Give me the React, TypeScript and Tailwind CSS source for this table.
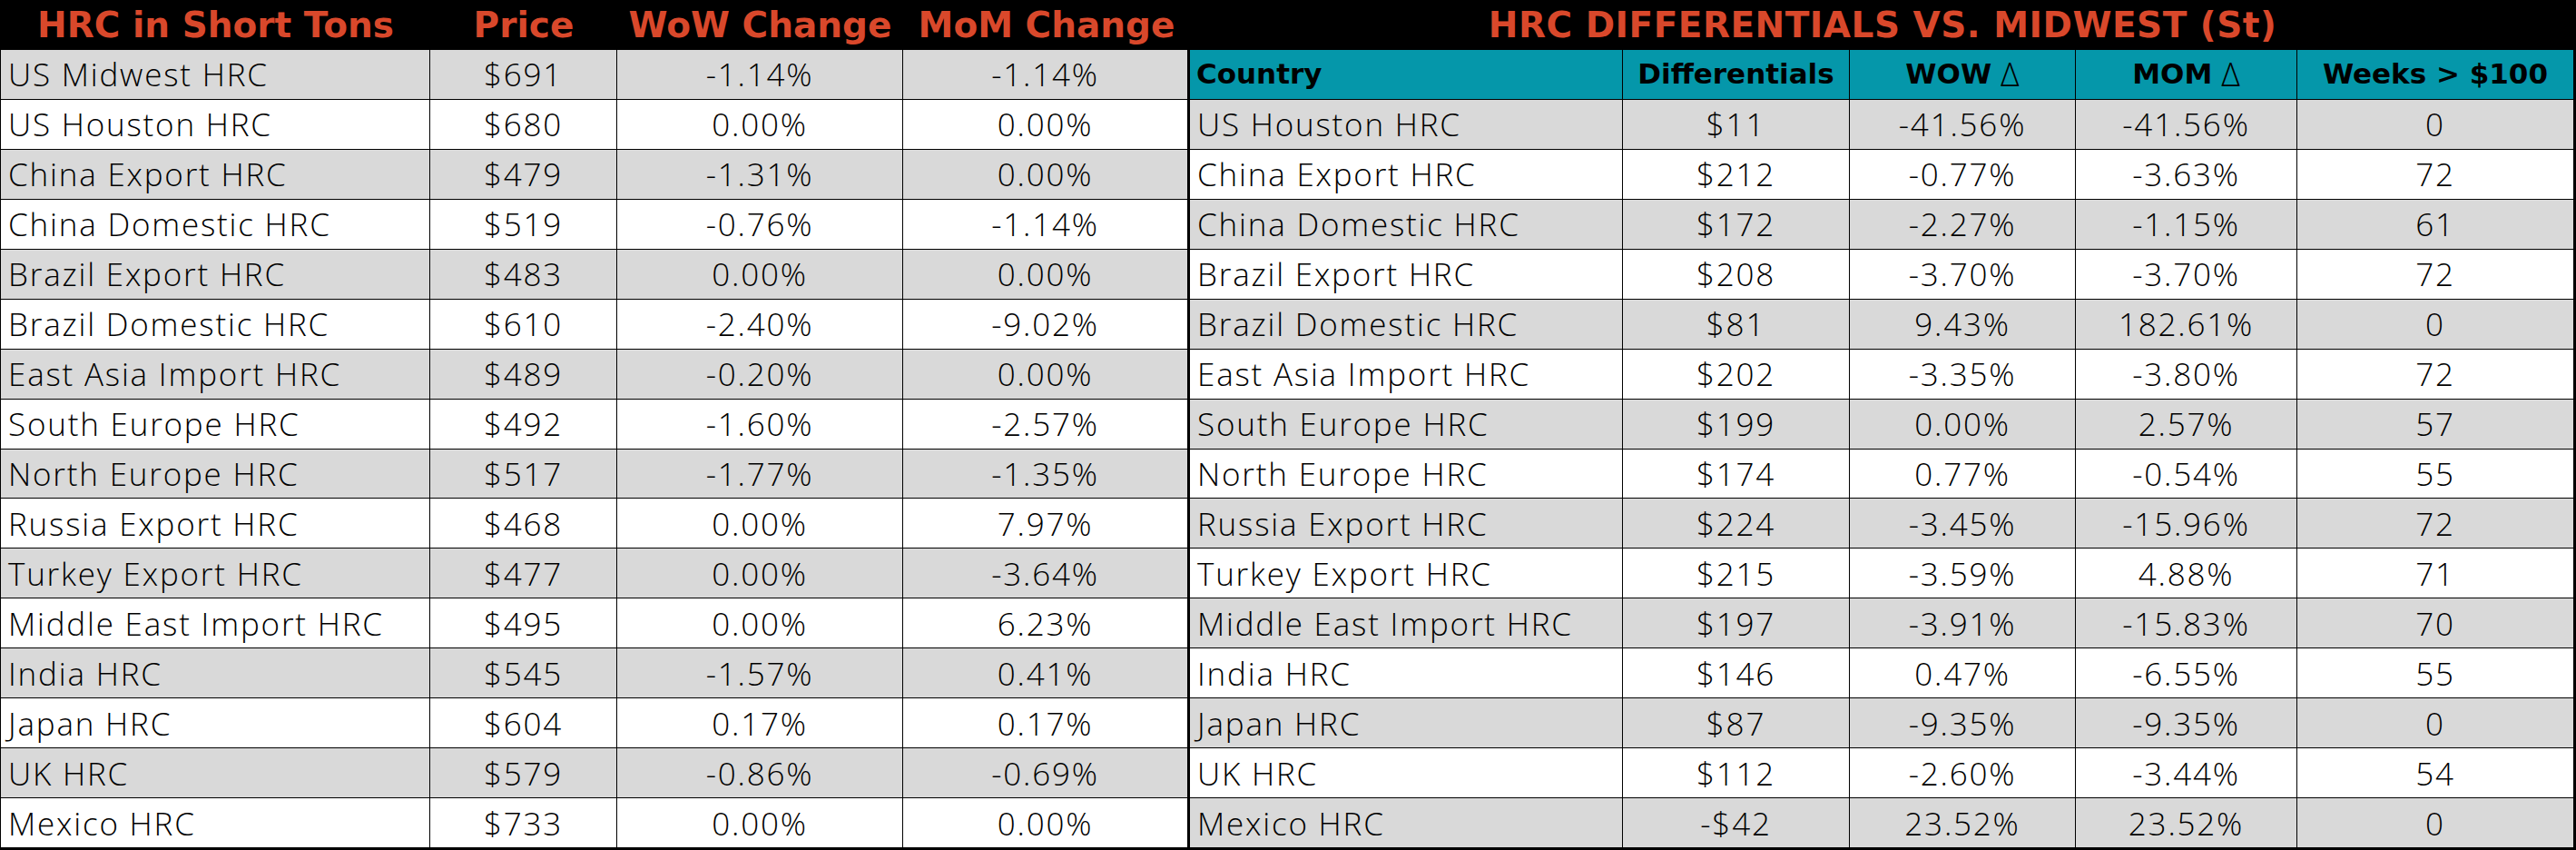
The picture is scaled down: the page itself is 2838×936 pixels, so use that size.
import React from 'react';

const titleFont = "font-['DejaVu_Sans',sans-serif] font-bold text-[#d9482b]";
const bodyFont = "font-['Open_Sans',sans-serif] font-light text-[35px] tracking-[1.8px] text-black";

const hrcRows: [string, string, string, string][] = [
  ['US Midwest HRC', '$691', '-1.14%', '-1.14%'],
  ['US Houston HRC', '$680', '0.00%', '0.00%'],
  ['China Export HRC', '$479', '-1.31%', '0.00%'],
  ['China Domestic HRC', '$519', '-0.76%', '-1.14%'],
  ['Brazil Export HRC', '$483', '0.00%', '0.00%'],
  ['Brazil Domestic HRC', '$610', '-2.40%', '-9.02%'],
  ['East Asia Import HRC', '$489', '-0.20%', '0.00%'],
  ['South Europe HRC', '$492', '-1.60%', '-2.57%'],
  ['North Europe HRC', '$517', '-1.77%', '-1.35%'],
  ['Russia Export HRC', '$468', '0.00%', '7.97%'],
  ['Turkey Export HRC', '$477', '0.00%', '-3.64%'],
  ['Middle East Import HRC', '$495', '0.00%', '6.23%'],
  ['India HRC', '$545', '-1.57%', '0.41%'],
  ['Japan HRC', '$604', '0.17%', '0.17%'],
  ['UK HRC', '$579', '-0.86%', '-0.69%'],
  ['Mexico HRC', '$733', '0.00%', '0.00%'],
];

const diffRows: [string, string, string, string, string][] = [
  ['US Houston HRC', '$11', '-41.56%', '-41.56%', '0'],
  ['China Export HRC', '$212', '-0.77%', '-3.63%', '72'],
  ['China Domestic HRC', '$172', '-2.27%', '-1.15%', '61'],
  ['Brazil Export HRC', '$208', '-3.70%', '-3.70%', '72'],
  ['Brazil Domestic HRC', '$81', '9.43%', '182.61%', '0'],
  ['East Asia Import HRC', '$202', '-3.35%', '-3.80%', '72'],
  ['South Europe HRC', '$199', '0.00%', '2.57%', '57'],
  ['North Europe HRC', '$174', '0.77%', '-0.54%', '55'],
  ['Russia Export HRC', '$224', '-3.45%', '-15.96%', '72'],
  ['Turkey Export HRC', '$215', '-3.59%', '4.88%', '71'],
  ['Middle East Import HRC', '$197', '-3.91%', '-15.83%', '70'],
  ['India HRC', '$146', '0.47%', '-6.55%', '55'],
  ['Japan HRC', '$87', '-9.35%', '-9.35%', '0'],
  ['UK HRC', '$112', '-2.60%', '-3.44%', '54'],
  ['Mexico HRC', '-$42', '23.52%', '23.52%', '0'],
];

function Cell({ text, first, shade }: { text: string; first?: boolean; shade: boolean }) {
  return (
    <div
      className={`flex items-center ${first ? 'justify-start pl-[8px]' : 'justify-center'} ${
        shade ? 'bg-[#d9d9d9]' : 'bg-white'
      } ${bodyFont} whitespace-nowrap leading-none`}
    >
      {text}
    </div>
  );
}

function HeadCell({ children, first }: { children: React.ReactNode; first?: boolean }) {
  return (
    <div
      className={`flex items-center ${first ? 'justify-start pl-[7px]' : 'justify-center'} bg-[#0597aa] font-['DejaVu_Sans',sans-serif] font-bold text-[31px] text-black whitespace-nowrap leading-none`}
    >
      {children}
    </div>
  );
}

export default function App() {
  return (
    <div className="flex h-[936px] w-[2838px] flex-col bg-black">
      {/* titles */}
      <div className="flex h-[55px] shrink-0">
        <div className={`grid w-[1310px] grid-cols-[473px_206px_315px_316px] items-center pl-px text-center text-[39px] leading-none ${titleFont}`}>
          <span>HRC in Short Tons</span>
          <span>Price</span>
          <span>WoW Change</span>
          <span>MoM Change</span>
        </div>
        <div className={`flex flex-1 items-center justify-center text-[39px] tracking-[0.5px] leading-none ${titleFont}`}>
          HRC DIFFERENTIALS VS. MIDWEST (St)
        </div>
      </div>

      {/* tables */}
      <div className="flex h-[881px] gap-[3px] pb-[3px] pl-px pr-[3px]">
        <div className="grid grid-cols-[472px_205px_314px_313px] grid-rows-[repeat(16,1fr)] gap-px">
          {hrcRows.map((r, i) =>
            r.map((t, j) => <Cell key={`${i}-${j}`} text={t} first={j === 0} shade={i % 2 === 0} />)
          )}
        </div>
        <div className="grid grid-cols-[476px_249px_248px_243px_304px] grid-rows-[repeat(16,1fr)] gap-px">
          <HeadCell first>Country</HeadCell>
          <HeadCell>Differentials</HeadCell>
          <HeadCell>
            WOW <span className="ml-[10px] font-['Open_Sans',sans-serif] font-light text-[36px]">Δ</span>
          </HeadCell>
          <HeadCell>
            MOM <span className="ml-[10px] font-['Open_Sans',sans-serif] font-light text-[36px]">Δ</span>
          </HeadCell>
          <HeadCell>Weeks &gt; $100</HeadCell>
          {diffRows.map((r, i) =>
            r.map((t, j) => <Cell key={`${i}-${j}`} text={t} first={j === 0} shade={i % 2 === 0} />)
          )}
        </div>
      </div>
    </div>
  );
}
